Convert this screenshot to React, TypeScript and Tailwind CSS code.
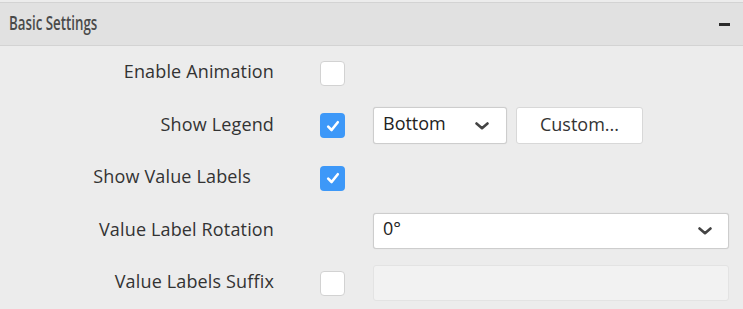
import { ReactNode } from "react";

const FONT = "font-['Open_Sans',sans-serif]";

function Check({ on }: { on?: boolean }) {
  return on ? (
    <div className="w-[25px] h-[25px] rounded-[4px] bg-[#3d98f8] flex items-center justify-center">
      <svg width="16" height="16" viewBox="0 0 16 16">
        <polyline points="3.2,8.6 6.6,12 12.8,4.2" fill="none" stroke="white" strokeWidth="2.6" strokeLinecap="round" strokeLinejoin="round" />
      </svg>
    </div>
  ) : (
    <div className="w-[25px] h-[25px] rounded-[4px] bg-white border border-[#d2d2d2]" />
  );
}

function Chevron() {
  return (
    <svg width="14" height="8" viewBox="0 0 14 8">
      <polyline points="1.5,1.5 7,6.2 12.5,1.5" fill="none" stroke="#444" strokeWidth="2.6" strokeLinecap="round" strokeLinejoin="round" />
    </svg>
  );
}

function Row({ label, labelClass, children }: { label: string; labelClass?: string; children: ReactNode }) {
  return (
    <div className="h-[52.5px] flex items-center">
      <div className={"w-[274px] -mt-[3px] text-right text-[18px] tracking-[0.15px] text-[#333] " + (labelClass ?? "")}>{label}</div>
      <div className="ml-[46px] flex items-center">{children}</div>
    </div>
  );
}

export default function App() {
  return (
    <div className={"w-[743px] h-[309px] bg-[#ececec] pt-[2px] " + FONT}>
      <div className="h-[44px] bg-[#e1e1e1] border-y border-[#d3d3d3] flex items-center justify-between pl-[9px] pr-[13px]">
        <span className="inline-block origin-left scale-x-[0.7] -mt-[2px] text-[19px] font-semibold text-[#4a4a4a]">Basic Settings</span>
        <div className="w-[11px] h-[3px] bg-[#2b2b2b]" />
      </div>
      <div className="pt-[1px]">
        <Row label="Enable Animation">
          <Check />
        </Row>
        <Row label="Show Legend">
          <Check on />
          <div className="ml-[28px] w-[134px] h-[37px] bg-white border border-[#cdcdcd] rounded-[3px] shadow-[0_0_1px_rgba(0,0,0,0.15)] flex items-center justify-between pl-[9px] pr-[17px] text-[18px] text-[#222]">
            <span className="-mt-[4px]">Bottom</span>
            <Chevron />
          </div>
          <button className="ml-[9px] w-[127px] h-[37px] bg-white border border-[#d8d8d8] rounded-[3px] text-[18px] text-[#333]">
            <span className="block -mt-[2px]">Custom...</span>
          </button>
        </Row>
        <Row label="Show Value Labels" labelClass="pr-[23px]">
          <Check on />
        </Row>
        <Row label="Value Label Rotation">
          <div className="ml-[53px] w-[356px] h-[36px] bg-white border border-[#cdcdcd] rounded-[3px] shadow-[0_0_1px_rgba(0,0,0,0.15)] flex items-center justify-between pl-[9px] pr-[16px] text-[18px] text-[#222]">
            <span className="-mt-[4px]">0°</span>
            <Chevron />
          </div>
        </Row>
        <Row label="Value Labels Suffix">
          <Check />
          <div className="ml-[28px] w-[356px] h-[36px] bg-[#f2f2f2] border border-[#e3e3e3] rounded-[3px]" />
        </Row>
      </div>
    </div>
  );
}
